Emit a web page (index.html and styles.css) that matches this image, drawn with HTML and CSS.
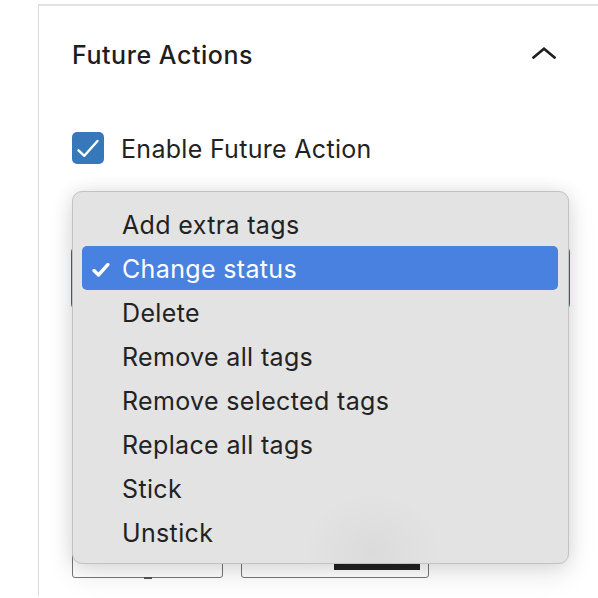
FILE: index.html
```html
<!DOCTYPE html>
<html>
<head>
<meta charset="utf-8">
<link rel="stylesheet" href="styles.css">
</head>
<body>
<div class="panel">
  <div class="head">
    <span class="title">Future Actions</span>
    <svg class="chev" width="24" height="12" viewBox="0 0 24 12"><path d="M1.5 10.5 L12 1.8 L22.5 10.5" fill="none" stroke="#1e1e1e" stroke-width="2.6" stroke-linecap="square"/></svg>
  </div>
  <label class="enable">
    <span class="cb"><svg width="32" height="32" viewBox="0 0 32 32"><path d="M6.5 18.3 L12.3 23.8 L25.5 9" fill="none" stroke="#fff" stroke-width="2.4" stroke-linecap="round" stroke-linejoin="round"/></svg></span>
    <span class="cb-label">Enable Future Action</span>
  </label>
  <div class="select"></div>
  <div class="fields">
    <div class="field f1"><span class="mark"></span></div>
    <div class="field f2"><span class="bar"></span></div>
  </div>
</div>
<ul class="menu">
  <li class="item">Add extra tags</li>
  <li class="item sel"><svg class="tick" width="18" height="14" viewBox="0 0 18 14"><path d="M2 7.5 L6.5 12 L15.8 1.6" fill="none" stroke="#fff" stroke-width="3.4" stroke-linecap="round" stroke-linejoin="round"/></svg>Change status</li>
  <li class="item">Delete</li>
  <li class="item">Remove all tags</li>
  <li class="item">Remove selected tags</li>
  <li class="item">Replace all tags</li>
  <li class="item">Stick</li>
  <li class="item">Unstick</li>
</ul>
</body>
</html>
```
FILE: styles.css
```css
html, body {
  margin: 0;
  padding: 0;
  background: #fff;
  overflow: hidden;
}
body {
  font-family: Inter, "Noto Sans", sans-serif;
  color: #1e1e1e;
  width: 598px;
  height: 598px;
  position: relative;
}
.panel {
  margin: 4px 0 0 38px;
  border-left: 1px solid #dcdcdc;
  border-top: 2px solid #e2e2e2;
  height: 592px;
  padding: 34px 29px 0 33px;
  box-sizing: border-box;
}
.head {
  display: flex;
  justify-content: space-between;
  align-items: center;
  height: 30px;
  padding-right: 13px;
}
.title {
  font-size: 25px;
  font-weight: 500;
  line-height: 30px;
  letter-spacing: 0.55px;
}
.chev {
  display: block;
  margin-top: -4px;
}
.enable {
  display: flex;
  align-items: center;
  margin-top: 62px;
  height: 32px;
}
.cb {
  width: 32px;
  height: 32px;
  border-radius: 5px;
  background: #3778bb;
  display: block;
}
.cb svg { display: block; }
.cb-label {
  margin-left: 17px;
  font-size: 25px;
  line-height: 34px;
  padding-top: 2px;
  color: #222;
  letter-spacing: 0.3px;
}
.select {
  margin: 82px 0 0 -1px;
  width: 497px;
  height: 62px;
  border: 1px solid #2a66c0;
  border-radius: 6px;
}
.fields {
  display: flex;
  gap: 18px;
  margin-top: 218px;
}
.field {
  height: 50px;
  border: 1.5px solid #777;
  border-radius: 3px;
  box-sizing: border-box;
  position: relative;
}
.f1 { width: 151px; }
.f2 { width: 188px; }
.mark {
  position: absolute;
  left: 71px;
  bottom: -1.5px;
  width: 8px;
  height: 2px;
  background: #555;
}
.bar {
  position: absolute;
  right: 8px;
  top: 31px;
  width: 86px;
  height: 10px;
  background: #222;
}
.menu {
  position: absolute;
  left: 72px;
  top: 191px;
  width: 497px;
  height: 373px;
  box-sizing: border-box;
  margin: 0;
  padding: 10px 10px 9px 9px;
  list-style: none;
  border: 1px solid #c2c2c2;
  border-radius: 10px;
  background:
    radial-gradient(ellipse 70px 60px at 300px 360px, rgba(0,0,0,0.035), rgba(0,0,0,0)),
    #e3e3e3;
  box-shadow: 0 0 18px rgba(0,0,0,0.10), 0 10px 28px rgba(0,0,0,0.10);
}
.item {
  height: 44px;
  line-height: 47px;
  padding-left: 40px;
  font-size: 25px;
  color: #222;
  letter-spacing: 0.35px;
  border-radius: 5px;
  position: relative;
}
.item.sel {
  background: #4881df;
  color: #fff;
}
.tick {
  position: absolute;
  left: 10px;
  top: 17px;
}
```
